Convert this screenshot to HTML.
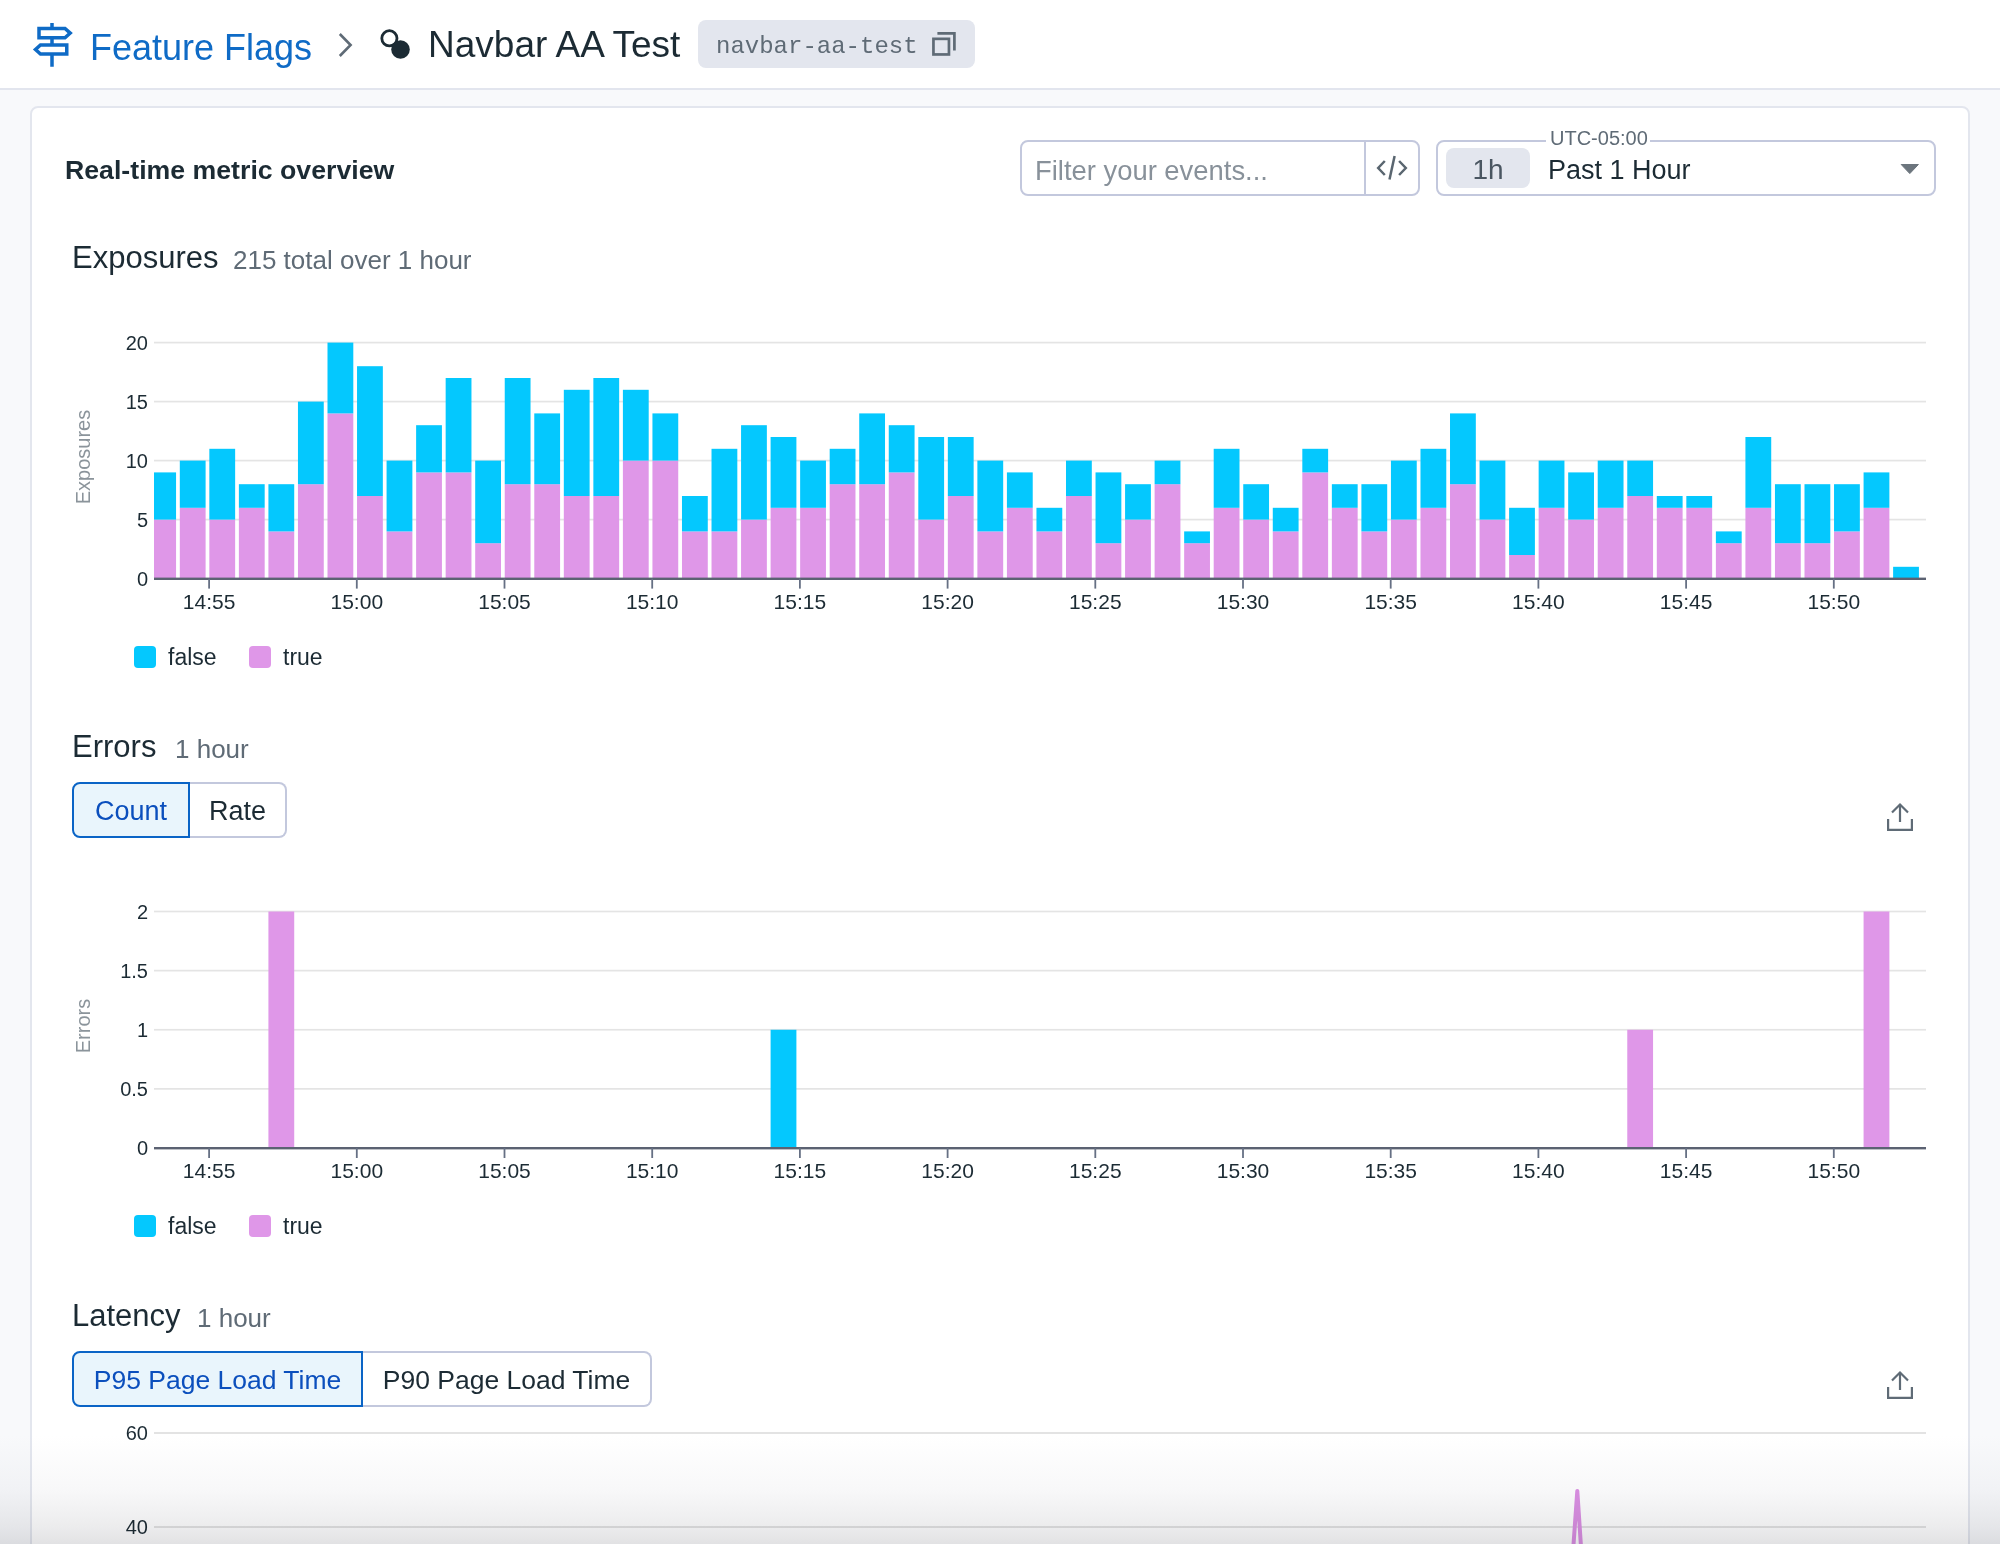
<!DOCTYPE html>
<html><head><meta charset="utf-8">
<style>
html,body{margin:0;padding:0;}
body{width:2000px;height:1544px;overflow:hidden;position:relative;background:#f8f9fb;font-family:"Liberation Sans",sans-serif;color:#1c2b34;}
.abs{position:absolute;white-space:nowrap;}
#hdr{position:absolute;left:0;top:0;width:2000px;height:88px;background:#fff;border-bottom:2px solid #e2e5ee;}
#card{position:absolute;left:30px;top:106px;width:1936px;height:1500px;background:#fff;border:2px solid #e3e6ee;border-radius:8px;}
svg.ov{position:absolute;left:0;top:0;}
.yl{font-size:20px;fill:#1c2b34;}
.xl{font-size:21px;fill:#1c2b34;}
.yt{font-size:20px;fill:#8b949b;}
.lg{font-size:23px;fill:#1c2b34;}
.h2{font-size:31px;line-height:38px;color:#1c2b34;}
.sub{font-size:26px;line-height:32px;color:#5f6b76;}
.btn{position:absolute;box-sizing:border-box;font-size:27px;padding-top:1px;text-align:center;white-space:nowrap;}
#fade{position:absolute;left:0;top:1436px;width:2000px;height:108px;mix-blend-mode:multiply;background:linear-gradient(to bottom,#ffffff 0%,#f8f8f9 50%,#ececed 84%,#e2e2e4 100%);}
</style></head>
<body>
<div id="hdr"></div>
<div id="card"></div>

<!-- header text -->
<div class="abs" style="left:90px;top:24.5px;font-size:36px;color:#0f6bc6;line-height:46px;">Feature Flags</div>
<div class="abs" style="left:428px;top:22px;font-size:37px;color:#1c2b34;line-height:46px;">Navbar AA Test</div>
<div class="abs" style="left:698px;top:20px;width:277px;height:48px;background:#e3e6ee;border-radius:8px;"></div>
<div class="abs" style="left:716px;top:31.5px;font-family:'Liberation Mono',monospace;font-size:24px;color:#5f6b76;line-height:30px;">navbar-aa-test</div>

<div class="abs" style="left:65px;top:152px;font-size:26.7px;font-weight:bold;line-height:36px;">Real-time metric overview</div>

<!-- filter -->
<div class="abs" style="left:1020px;top:140px;width:400px;height:56px;box-sizing:border-box;border:2px solid #c3c8dd;border-radius:8px;background:#fff;"></div>
<div class="abs" style="left:1364px;top:142px;width:2px;height:52px;background:#c3c8dd;"></div>
<div class="abs" style="left:1035px;top:154px;font-size:27.4px;color:#88919a;line-height:34px;">Filter your events...</div>

<!-- time -->
<div class="abs" style="left:1436px;top:140px;width:500px;height:56px;box-sizing:border-box;border:2px solid #c3c8dd;border-radius:8px;background:#fff;"></div>
<div class="abs" style="left:1546px;top:128px;width:104px;height:16px;background:#fff;"></div>
<div class="abs" style="left:1550px;top:126px;font-size:20px;color:#5f6b76;line-height:24px;">UTC-05:00</div>
<div class="abs" style="left:1446px;top:148px;width:84px;height:40px;background:#e3e6ee;border-radius:8px;"></div>
<div class="abs" style="left:1446px;top:153px;width:84px;text-align:center;font-size:28px;color:#4a5661;line-height:34px;">1h</div>
<div class="abs" style="left:1548px;top:153px;font-size:27px;color:#1c2b34;line-height:34px;">Past 1 Hour</div>

<!-- section titles -->
<div class="abs h2" style="left:72px;top:239px;">Exposures</div>
<div class="abs sub" style="left:233px;top:244px;">215 total over 1 hour</div>
<div class="abs h2" style="left:72px;top:728px;">Errors</div>
<div class="abs sub" style="left:175px;top:733px;">1 hour</div>
<div class="abs h2" style="left:72px;top:1297px;">Latency</div>
<div class="abs sub" style="left:197px;top:1302px;">1 hour</div>

<div class="btn" style="left:72px;top:782px;width:118px;height:56px;line-height:52px;border:2px solid #0a64c6;border-radius:8px 0 0 8px;background:#e9f5fc;color:#0b4fbd;">Count</div>
<div class="btn" style="left:190px;top:782px;width:97px;height:56px;line-height:52px;border:2px solid #c3c8dd;border-left:none;border-radius:0 8px 8px 0;background:#fff;color:#1c2b34;">Rate</div>
<div class="btn" style="left:72px;top:1351px;width:291px;height:56px;line-height:52px;border:2px solid #0a64c6;border-radius:8px 0 0 8px;background:#e9f5fc;color:#0b4fbd;font-size:26.5px;">P95 Page Load Time</div>
<div class="btn" style="left:363px;top:1351px;width:289px;height:56px;line-height:52px;border:2px solid #c3c8dd;border-left:none;border-radius:0 8px 8px 0;background:#fff;color:#1c2b34;font-size:26.5px;">P90 Page Load Time</div>

<svg class="ov" width="2000" height="1544" style="font-family:'Liberation Sans',sans-serif">
<!-- signpost icon -->
<g fill="none" stroke="#0f6bc6" stroke-width="3.5">
  <path d="M39 28.5 H65 L70.2 33.1 L65 37.7 H39 Z"/>
  <path d="M66.75 45 V54 H40.5 L35.5 49.5 L40.5 45 Z"/>
  <path d="M52 23 V28.5 M52 37.7 V45 M52 54 V66.7"/>
</g>
<!-- chevron -->
<path d="M339.8 34 L350.6 45 L339.8 56" fill="none" stroke="#5f6b76" stroke-width="2.6"/>
<!-- flag icon -->
<circle cx="389.4" cy="38.3" r="7.6" fill="none" stroke="#1c2b34" stroke-width="2.8"/>
<circle cx="400.5" cy="49.5" r="9.3" fill="#1c2b34"/>
<!-- copy icon -->
<g fill="none" stroke="#5f6b76" stroke-width="2.7">
  <rect x="933.45" y="38.85" width="15.5" height="15.6"/>
  <path d="M937.4 33.45 H954.4 V50.5"/>
</g>
<!-- code icon -->
<g fill="none" stroke="#5a6670" stroke-width="2.5">
  <path d="M1384.8 161 L1378.2 168 L1384.8 175"/>
  <path d="M1399.1 161 L1405.8 168 L1399.1 175"/>
  <path d="M1394.6 156 L1389.5 179.6"/>
</g>
<!-- caret -->
<path d="M1901.2 164.5 H1918.4 L1909.8 173.6 Z" fill="#6c757d" stroke="#6c757d" stroke-width="1" stroke-linejoin="round"/>
<!-- export icons -->
<g fill="none" stroke="#5f6b76" stroke-width="2.2">
  <path d="M1900 804.5 V822"/><path d="M1892 812.5 L1900 804.5 L1908 812.5"/><path d="M1888.1 819 V829.9 H1911.9 V819"/>
  <path d="M1900 1372.5 V1390"/><path d="M1892 1380.5 L1900 1372.5 L1908 1380.5"/><path d="M1888.1 1387 V1397.9 H1911.9 V1387"/>
</g>
<text x="148" y="585.60" text-anchor="end" class="yl">0</text>
<rect x="154" y="518.75" width="1772" height="1.7" fill="#e4e4e4"/>
<text x="148" y="526.60" text-anchor="end" class="yl">5</text>
<rect x="154" y="459.75" width="1772" height="1.7" fill="#e4e4e4"/>
<text x="148" y="467.60" text-anchor="end" class="yl">10</text>
<rect x="154" y="400.75" width="1772" height="1.7" fill="#e4e4e4"/>
<text x="148" y="408.60" text-anchor="end" class="yl">15</text>
<rect x="154" y="341.75" width="1772" height="1.7" fill="#e4e4e4"/>
<text x="148" y="349.60" text-anchor="end" class="yl">20</text>
<rect x="154.00" y="519.60" width="22.06" height="59.00" fill="#df97e8"/>
<rect x="154.00" y="472.40" width="22.06" height="47.20" fill="#04c8fe"/>
<rect x="179.80" y="507.80" width="25.80" height="70.80" fill="#df97e8"/>
<rect x="179.80" y="460.60" width="25.80" height="47.20" fill="#04c8fe"/>
<rect x="209.34" y="519.60" width="25.80" height="59.00" fill="#df97e8"/>
<rect x="209.34" y="448.80" width="25.80" height="70.80" fill="#04c8fe"/>
<rect x="238.88" y="507.80" width="25.80" height="70.80" fill="#df97e8"/>
<rect x="238.88" y="484.20" width="25.80" height="23.60" fill="#04c8fe"/>
<rect x="268.42" y="531.40" width="25.80" height="47.20" fill="#df97e8"/>
<rect x="268.42" y="484.20" width="25.80" height="47.20" fill="#04c8fe"/>
<rect x="297.96" y="484.20" width="25.80" height="94.40" fill="#df97e8"/>
<rect x="297.96" y="401.60" width="25.80" height="82.60" fill="#04c8fe"/>
<rect x="327.50" y="413.40" width="25.80" height="165.20" fill="#df97e8"/>
<rect x="327.50" y="342.60" width="25.80" height="70.80" fill="#04c8fe"/>
<rect x="357.04" y="496.00" width="25.80" height="82.60" fill="#df97e8"/>
<rect x="357.04" y="366.20" width="25.80" height="129.80" fill="#04c8fe"/>
<rect x="386.58" y="531.40" width="25.80" height="47.20" fill="#df97e8"/>
<rect x="386.58" y="460.60" width="25.80" height="70.80" fill="#04c8fe"/>
<rect x="416.12" y="472.40" width="25.80" height="106.20" fill="#df97e8"/>
<rect x="416.12" y="425.20" width="25.80" height="47.20" fill="#04c8fe"/>
<rect x="445.66" y="472.40" width="25.80" height="106.20" fill="#df97e8"/>
<rect x="445.66" y="378.00" width="25.80" height="94.40" fill="#04c8fe"/>
<rect x="475.20" y="543.20" width="25.80" height="35.40" fill="#df97e8"/>
<rect x="475.20" y="460.60" width="25.80" height="82.60" fill="#04c8fe"/>
<rect x="504.74" y="484.20" width="25.80" height="94.40" fill="#df97e8"/>
<rect x="504.74" y="378.00" width="25.80" height="106.20" fill="#04c8fe"/>
<rect x="534.28" y="484.20" width="25.80" height="94.40" fill="#df97e8"/>
<rect x="534.28" y="413.40" width="25.80" height="70.80" fill="#04c8fe"/>
<rect x="563.82" y="496.00" width="25.80" height="82.60" fill="#df97e8"/>
<rect x="563.82" y="389.80" width="25.80" height="106.20" fill="#04c8fe"/>
<rect x="593.36" y="496.00" width="25.80" height="82.60" fill="#df97e8"/>
<rect x="593.36" y="378.00" width="25.80" height="118.00" fill="#04c8fe"/>
<rect x="622.90" y="460.60" width="25.80" height="118.00" fill="#df97e8"/>
<rect x="622.90" y="389.80" width="25.80" height="70.80" fill="#04c8fe"/>
<rect x="652.44" y="460.60" width="25.80" height="118.00" fill="#df97e8"/>
<rect x="652.44" y="413.40" width="25.80" height="47.20" fill="#04c8fe"/>
<rect x="681.98" y="531.40" width="25.80" height="47.20" fill="#df97e8"/>
<rect x="681.98" y="496.00" width="25.80" height="35.40" fill="#04c8fe"/>
<rect x="711.52" y="531.40" width="25.80" height="47.20" fill="#df97e8"/>
<rect x="711.52" y="448.80" width="25.80" height="82.60" fill="#04c8fe"/>
<rect x="741.06" y="519.60" width="25.80" height="59.00" fill="#df97e8"/>
<rect x="741.06" y="425.20" width="25.80" height="94.40" fill="#04c8fe"/>
<rect x="770.60" y="507.80" width="25.80" height="70.80" fill="#df97e8"/>
<rect x="770.60" y="437.00" width="25.80" height="70.80" fill="#04c8fe"/>
<rect x="800.14" y="507.80" width="25.80" height="70.80" fill="#df97e8"/>
<rect x="800.14" y="460.60" width="25.80" height="47.20" fill="#04c8fe"/>
<rect x="829.68" y="484.20" width="25.80" height="94.40" fill="#df97e8"/>
<rect x="829.68" y="448.80" width="25.80" height="35.40" fill="#04c8fe"/>
<rect x="859.22" y="484.20" width="25.80" height="94.40" fill="#df97e8"/>
<rect x="859.22" y="413.40" width="25.80" height="70.80" fill="#04c8fe"/>
<rect x="888.76" y="472.40" width="25.80" height="106.20" fill="#df97e8"/>
<rect x="888.76" y="425.20" width="25.80" height="47.20" fill="#04c8fe"/>
<rect x="918.30" y="519.60" width="25.80" height="59.00" fill="#df97e8"/>
<rect x="918.30" y="437.00" width="25.80" height="82.60" fill="#04c8fe"/>
<rect x="947.84" y="496.00" width="25.80" height="82.60" fill="#df97e8"/>
<rect x="947.84" y="437.00" width="25.80" height="59.00" fill="#04c8fe"/>
<rect x="977.38" y="531.40" width="25.80" height="47.20" fill="#df97e8"/>
<rect x="977.38" y="460.60" width="25.80" height="70.80" fill="#04c8fe"/>
<rect x="1006.92" y="507.80" width="25.80" height="70.80" fill="#df97e8"/>
<rect x="1006.92" y="472.40" width="25.80" height="35.40" fill="#04c8fe"/>
<rect x="1036.46" y="531.40" width="25.80" height="47.20" fill="#df97e8"/>
<rect x="1036.46" y="507.80" width="25.80" height="23.60" fill="#04c8fe"/>
<rect x="1066.00" y="496.00" width="25.80" height="82.60" fill="#df97e8"/>
<rect x="1066.00" y="460.60" width="25.80" height="35.40" fill="#04c8fe"/>
<rect x="1095.54" y="543.20" width="25.80" height="35.40" fill="#df97e8"/>
<rect x="1095.54" y="472.40" width="25.80" height="70.80" fill="#04c8fe"/>
<rect x="1125.08" y="519.60" width="25.80" height="59.00" fill="#df97e8"/>
<rect x="1125.08" y="484.20" width="25.80" height="35.40" fill="#04c8fe"/>
<rect x="1154.62" y="484.20" width="25.80" height="94.40" fill="#df97e8"/>
<rect x="1154.62" y="460.60" width="25.80" height="23.60" fill="#04c8fe"/>
<rect x="1184.16" y="543.20" width="25.80" height="35.40" fill="#df97e8"/>
<rect x="1184.16" y="531.40" width="25.80" height="11.80" fill="#04c8fe"/>
<rect x="1213.70" y="507.80" width="25.80" height="70.80" fill="#df97e8"/>
<rect x="1213.70" y="448.80" width="25.80" height="59.00" fill="#04c8fe"/>
<rect x="1243.24" y="519.60" width="25.80" height="59.00" fill="#df97e8"/>
<rect x="1243.24" y="484.20" width="25.80" height="35.40" fill="#04c8fe"/>
<rect x="1272.78" y="531.40" width="25.80" height="47.20" fill="#df97e8"/>
<rect x="1272.78" y="507.80" width="25.80" height="23.60" fill="#04c8fe"/>
<rect x="1302.32" y="472.40" width="25.80" height="106.20" fill="#df97e8"/>
<rect x="1302.32" y="448.80" width="25.80" height="23.60" fill="#04c8fe"/>
<rect x="1331.86" y="507.80" width="25.80" height="70.80" fill="#df97e8"/>
<rect x="1331.86" y="484.20" width="25.80" height="23.60" fill="#04c8fe"/>
<rect x="1361.40" y="531.40" width="25.80" height="47.20" fill="#df97e8"/>
<rect x="1361.40" y="484.20" width="25.80" height="47.20" fill="#04c8fe"/>
<rect x="1390.94" y="519.60" width="25.80" height="59.00" fill="#df97e8"/>
<rect x="1390.94" y="460.60" width="25.80" height="59.00" fill="#04c8fe"/>
<rect x="1420.48" y="507.80" width="25.80" height="70.80" fill="#df97e8"/>
<rect x="1420.48" y="448.80" width="25.80" height="59.00" fill="#04c8fe"/>
<rect x="1450.02" y="484.20" width="25.80" height="94.40" fill="#df97e8"/>
<rect x="1450.02" y="413.40" width="25.80" height="70.80" fill="#04c8fe"/>
<rect x="1479.56" y="519.60" width="25.80" height="59.00" fill="#df97e8"/>
<rect x="1479.56" y="460.60" width="25.80" height="59.00" fill="#04c8fe"/>
<rect x="1509.10" y="555.00" width="25.80" height="23.60" fill="#df97e8"/>
<rect x="1509.10" y="507.80" width="25.80" height="47.20" fill="#04c8fe"/>
<rect x="1538.64" y="507.80" width="25.80" height="70.80" fill="#df97e8"/>
<rect x="1538.64" y="460.60" width="25.80" height="47.20" fill="#04c8fe"/>
<rect x="1568.18" y="519.60" width="25.80" height="59.00" fill="#df97e8"/>
<rect x="1568.18" y="472.40" width="25.80" height="47.20" fill="#04c8fe"/>
<rect x="1597.72" y="507.80" width="25.80" height="70.80" fill="#df97e8"/>
<rect x="1597.72" y="460.60" width="25.80" height="47.20" fill="#04c8fe"/>
<rect x="1627.26" y="496.00" width="25.80" height="82.60" fill="#df97e8"/>
<rect x="1627.26" y="460.60" width="25.80" height="35.40" fill="#04c8fe"/>
<rect x="1656.80" y="507.80" width="25.80" height="70.80" fill="#df97e8"/>
<rect x="1656.80" y="496.00" width="25.80" height="11.80" fill="#04c8fe"/>
<rect x="1686.34" y="507.80" width="25.80" height="70.80" fill="#df97e8"/>
<rect x="1686.34" y="496.00" width="25.80" height="11.80" fill="#04c8fe"/>
<rect x="1715.88" y="543.20" width="25.80" height="35.40" fill="#df97e8"/>
<rect x="1715.88" y="531.40" width="25.80" height="11.80" fill="#04c8fe"/>
<rect x="1745.42" y="507.80" width="25.80" height="70.80" fill="#df97e8"/>
<rect x="1745.42" y="437.00" width="25.80" height="70.80" fill="#04c8fe"/>
<rect x="1774.96" y="543.20" width="25.80" height="35.40" fill="#df97e8"/>
<rect x="1774.96" y="484.20" width="25.80" height="59.00" fill="#04c8fe"/>
<rect x="1804.50" y="543.20" width="25.80" height="35.40" fill="#df97e8"/>
<rect x="1804.50" y="484.20" width="25.80" height="59.00" fill="#04c8fe"/>
<rect x="1834.04" y="531.40" width="25.80" height="47.20" fill="#df97e8"/>
<rect x="1834.04" y="484.20" width="25.80" height="47.20" fill="#04c8fe"/>
<rect x="1863.58" y="507.80" width="25.80" height="70.80" fill="#df97e8"/>
<rect x="1863.58" y="472.40" width="25.80" height="35.40" fill="#04c8fe"/>
<rect x="1893.12" y="566.80" width="25.80" height="11.80" fill="#04c8fe"/>
<rect x="154" y="577.60" width="1772" height="2.4" fill="#5b6272"/>
<rect x="208.20" y="578.60" width="1.8" height="10" fill="#667084"/>
<text x="209.10" y="608.60" text-anchor="middle" class="xl">14:55</text>
<rect x="355.90" y="578.60" width="1.8" height="10" fill="#667084"/>
<text x="356.80" y="608.60" text-anchor="middle" class="xl">15:00</text>
<rect x="503.60" y="578.60" width="1.8" height="10" fill="#667084"/>
<text x="504.50" y="608.60" text-anchor="middle" class="xl">15:05</text>
<rect x="651.30" y="578.60" width="1.8" height="10" fill="#667084"/>
<text x="652.20" y="608.60" text-anchor="middle" class="xl">15:10</text>
<rect x="799.00" y="578.60" width="1.8" height="10" fill="#667084"/>
<text x="799.90" y="608.60" text-anchor="middle" class="xl">15:15</text>
<rect x="946.70" y="578.60" width="1.8" height="10" fill="#667084"/>
<text x="947.60" y="608.60" text-anchor="middle" class="xl">15:20</text>
<rect x="1094.40" y="578.60" width="1.8" height="10" fill="#667084"/>
<text x="1095.30" y="608.60" text-anchor="middle" class="xl">15:25</text>
<rect x="1242.10" y="578.60" width="1.8" height="10" fill="#667084"/>
<text x="1243.00" y="608.60" text-anchor="middle" class="xl">15:30</text>
<rect x="1389.80" y="578.60" width="1.8" height="10" fill="#667084"/>
<text x="1390.70" y="608.60" text-anchor="middle" class="xl">15:35</text>
<rect x="1537.50" y="578.60" width="1.8" height="10" fill="#667084"/>
<text x="1538.40" y="608.60" text-anchor="middle" class="xl">15:40</text>
<rect x="1685.20" y="578.60" width="1.8" height="10" fill="#667084"/>
<text x="1686.10" y="608.60" text-anchor="middle" class="xl">15:45</text>
<rect x="1832.90" y="578.60" width="1.8" height="10" fill="#667084"/>
<text x="1833.80" y="608.60" text-anchor="middle" class="xl">15:50</text>
<text transform="translate(90,457) rotate(-90)" text-anchor="middle" class="yt">Exposures</text>
<rect x="134" y="646" width="22" height="22" rx="4" fill="#04c8fe"/>
<text x="168" y="665" class="lg">false</text>
<rect x="249" y="646" width="22" height="22" rx="4" fill="#df97e8"/>
<text x="283" y="665" class="lg">true</text>
<text x="148" y="1155.00" text-anchor="end" class="yl">0</text>
<rect x="154" y="1088.03" width="1772" height="1.7" fill="#e4e4e4"/>
<text x="148" y="1095.88" text-anchor="end" class="yl">0.5</text>
<rect x="154" y="1028.90" width="1772" height="1.7" fill="#e4e4e4"/>
<text x="148" y="1036.75" text-anchor="end" class="yl">1</text>
<rect x="154" y="969.77" width="1772" height="1.7" fill="#e4e4e4"/>
<text x="148" y="977.62" text-anchor="end" class="yl">1.5</text>
<rect x="154" y="910.65" width="1772" height="1.7" fill="#e4e4e4"/>
<text x="148" y="918.50" text-anchor="end" class="yl">2</text>
<rect x="268.42" y="911.50" width="25.80" height="236.50" fill="#df97e8"/>
<rect x="770.60" y="1029.75" width="25.80" height="118.25" fill="#04c8fe"/>
<rect x="1627.26" y="1029.75" width="25.80" height="118.25" fill="#df97e8"/>
<rect x="1863.58" y="911.50" width="25.80" height="236.50" fill="#df97e8"/>
<rect x="154" y="1147.00" width="1772" height="2.4" fill="#5b6272"/>
<rect x="208.20" y="1148.00" width="1.8" height="10" fill="#667084"/>
<text x="209.10" y="1178.00" text-anchor="middle" class="xl">14:55</text>
<rect x="355.90" y="1148.00" width="1.8" height="10" fill="#667084"/>
<text x="356.80" y="1178.00" text-anchor="middle" class="xl">15:00</text>
<rect x="503.60" y="1148.00" width="1.8" height="10" fill="#667084"/>
<text x="504.50" y="1178.00" text-anchor="middle" class="xl">15:05</text>
<rect x="651.30" y="1148.00" width="1.8" height="10" fill="#667084"/>
<text x="652.20" y="1178.00" text-anchor="middle" class="xl">15:10</text>
<rect x="799.00" y="1148.00" width="1.8" height="10" fill="#667084"/>
<text x="799.90" y="1178.00" text-anchor="middle" class="xl">15:15</text>
<rect x="946.70" y="1148.00" width="1.8" height="10" fill="#667084"/>
<text x="947.60" y="1178.00" text-anchor="middle" class="xl">15:20</text>
<rect x="1094.40" y="1148.00" width="1.8" height="10" fill="#667084"/>
<text x="1095.30" y="1178.00" text-anchor="middle" class="xl">15:25</text>
<rect x="1242.10" y="1148.00" width="1.8" height="10" fill="#667084"/>
<text x="1243.00" y="1178.00" text-anchor="middle" class="xl">15:30</text>
<rect x="1389.80" y="1148.00" width="1.8" height="10" fill="#667084"/>
<text x="1390.70" y="1178.00" text-anchor="middle" class="xl">15:35</text>
<rect x="1537.50" y="1148.00" width="1.8" height="10" fill="#667084"/>
<text x="1538.40" y="1178.00" text-anchor="middle" class="xl">15:40</text>
<rect x="1685.20" y="1148.00" width="1.8" height="10" fill="#667084"/>
<text x="1686.10" y="1178.00" text-anchor="middle" class="xl">15:45</text>
<rect x="1832.90" y="1148.00" width="1.8" height="10" fill="#667084"/>
<text x="1833.80" y="1178.00" text-anchor="middle" class="xl">15:50</text>
<text transform="translate(90,1026) rotate(-90)" text-anchor="middle" class="yt">Errors</text>
<rect x="134" y="1215" width="22" height="22" rx="4" fill="#04c8fe"/>
<text x="168" y="1234" class="lg">false</text>
<rect x="249" y="1215" width="22" height="22" rx="4" fill="#df97e8"/>
<text x="283" y="1234" class="lg">true</text>
<!-- latency -->
<rect x="154" y="1432" width="1772" height="2" fill="#e3e3e3"/>
<rect x="154" y="1526" width="1772" height="2" fill="#e3e3e3"/>
<text x="148" y="1439.5" text-anchor="end" class="yl">60</text>
<text x="148" y="1533.5" text-anchor="end" class="yl">40</text>
<path d="M1571 1580 L1577.3 1491 L1583.2 1580" fill="none" stroke="#dc90e4" stroke-width="4" stroke-linejoin="round"/>
</svg>
<div id="fade"></div>
</body></html>
